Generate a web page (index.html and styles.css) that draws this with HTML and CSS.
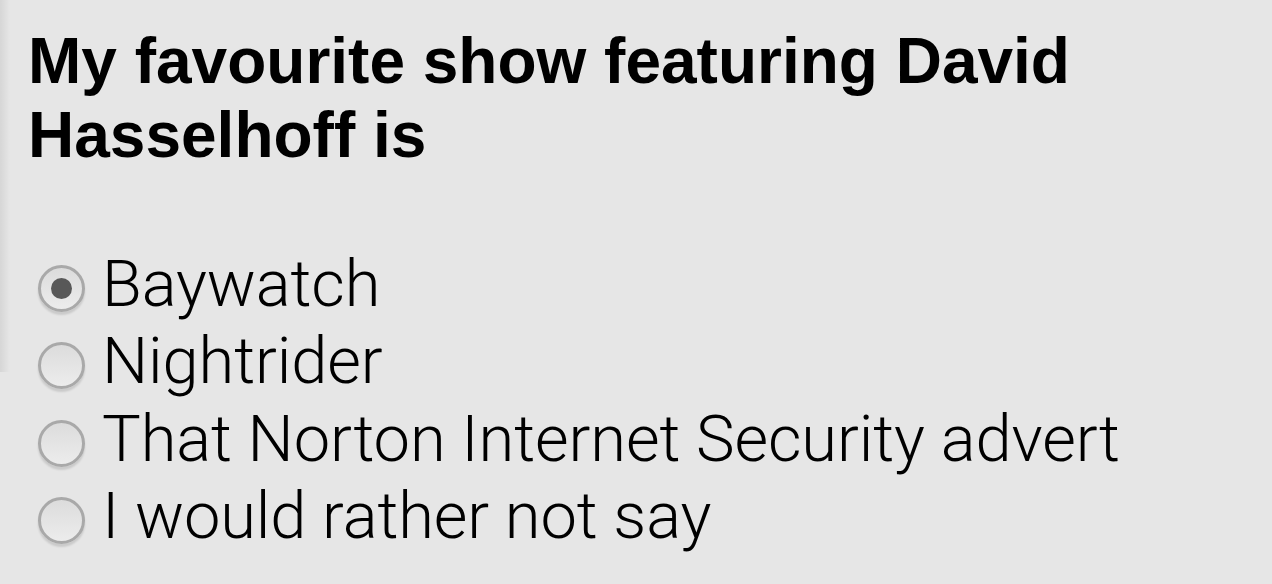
FILE: index.html
```html
<!DOCTYPE html>
<html lang="en">
<head>
<meta charset="utf-8">
<title>Poll</title>
<link rel="stylesheet" href="styles.css">
</head>
<body>
<div class="edge-shadow"></div>
<form class="poll">
  <h1 class="question">My favourite show featuring David Hasselhoff is</h1>
  <div class="options">
    <label class="option"><input type="radio" name="show" class="radio" checked><span class="label">Baywatch</span></label>
    <label class="option"><input type="radio" name="show" class="radio"><span class="label">Nightrider</span></label>
    <label class="option"><input type="radio" name="show" class="radio"><span class="label">That Norton Internet Security advert</span></label>
    <label class="option"><input type="radio" name="show" class="radio"><span class="label">I would rather not say</span></label>
  </div>
</form>
</body>
</html>
```

FILE: styles.css
```css
html, body {
  margin: 0;
  padding: 0;
  background: #e6e6e6;
  height: 100%;
  overflow: hidden;
}
body {
  position: relative;
}
.edge-shadow {
  position: absolute;
  left: 0;
  top: 0;
  width: 10px;
  height: 372px;
  background: linear-gradient(to right, rgba(0,0,0,0.07), rgba(0,0,0,0));
}
.poll {
  padding: 24px 0 0 28px;
}
.question {
  margin: 0;
  font-family: "Liberation Sans", Arial, sans-serif;
  font-weight: 700;
  font-size: 64px;
  line-height: 74px;
  color: #000;
  width: 1100px;
}
.options {
  display: flex;
  flex-direction: column;
  margin-top: 78px;
  padding-left: 10px;
}
.option {
  display: flex;
  align-items: center;
  height: 77.3px;
  gap: 17px;
}
.radio {
  appearance: none;
  -webkit-appearance: none;
  margin: 0;
  width: 47px;
  height: 47px;
  flex: none;
  border-radius: 50%;
  border: 3px solid #a9a9a9;
  background: linear-gradient(#dcdcdc, #ececec);
  box-shadow: 0 3px 2px rgba(0,0,0,0.12);
  display: flex;
  align-items: center;
  justify-content: center;
  box-sizing: border-box;
}
.radio:checked::after {
  content: "";
  width: 21px;
  height: 21px;
  border-radius: 50%;
  background: #585858;
}
.label {
  font-family: Roboto, "Liberation Sans", sans-serif;
  font-weight: 300;
  font-size: 65px;
  line-height: 65px;
  letter-spacing: -0.1px;
  color: #000;
  white-space: nowrap;
  padding-bottom: 8px;
}
```
